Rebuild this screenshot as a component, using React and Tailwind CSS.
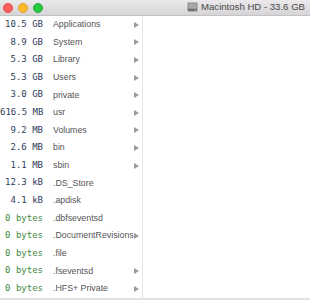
import React from 'react';

const rows = [
  { size: '10.5 GB', name: 'Applications', dir: true },
  { size: '8.9 GB', name: 'System', dir: true },
  { size: '5.3 GB', name: 'Library', dir: true },
  { size: '5.3 GB', name: 'Users', dir: true },
  { size: '3.0 GB', name: 'private', dir: true },
  { size: '616.5 MB', name: 'usr', dir: true },
  { size: '9.2 MB', name: 'Volumes', dir: true },
  { size: '2.6 MB', name: 'bin', dir: true },
  { size: '1.1 MB', name: 'sbin', dir: true },
  { size: '12.3 kB', name: '.DS_Store' },
  { size: '4.1 kB', name: '.apdisk' },
  { size: '0 bytes', name: '.dbfseventsd' },
  { size: '0 bytes', name: '.DocumentRevisions', dir: true },
  { size: '0 bytes', name: '.file' },
  { size: '0 bytes', name: '.fseventsd', dir: true },
  { size: '0 bytes', name: '.HFS+ Private', dir: true },
];

const DiskIcon = () => (
  <svg width="11" height="10" viewBox="0 0 11 10" className="mr-[3px]">
    <rect x="0.5" y="0.5" width="10" height="9" rx="1" fill="#8a8a8a" />
    <rect x="1.5" y="1.5" width="8" height="5" rx="0.5" fill="#a8a8a8" />
    <rect x="1" y="7" width="9" height="2" fill="#6e6e6e" />
    <circle cx="8.5" cy="8" r="0.6" fill="#cfcfcf" />
  </svg>
);

const App = () => {
  return (
    <div className="w-[310px] h-[300px] bg-white overflow-hidden flex flex-col" style={{ fontFamily: '"Liberation Sans", Arial, sans-serif' }}>
      <div className="h-[16px] shrink-0 flex items-center px-[2px] bg-gradient-to-b from-[#ebe9eb] to-[#d6d4d6] border-b border-[#c4c2c4]">
        <div className="flex items-center gap-[5px] pl-[1px]">
          <span className="w-[10px] h-[10px] rounded-full bg-[#fc5f57] border border-[#e2463f]" />
          <span className="w-[10px] h-[10px] rounded-full bg-[#fdbc2e] border border-[#e0a128]" />
          <span className="w-[10px] h-[10px] rounded-full bg-[#28c840] border border-[#1fab2f]" />
        </div>
        <div className="ml-auto flex items-center pr-[3px] text-[9.6px] text-[#4a4a4a]">
          <DiskIcon />
          <span>Macintosh HD - 33.6 GB</span>
        </div>
      </div>
      <div className="flex flex-1 min-h-0">
        <div className="w-[143px] border-r border-[#e6e6e6] flex flex-col">
          {rows.map((r) => {
            const zero = r.size.endsWith('bytes');
            return (
              <div key={r.name} className="h-[17.6px] shrink-0 flex items-center">
                <span
                  className={`w-[43px] shrink-0 text-right text-[9px] whitespace-nowrap ${zero ? 'text-[#3f8a3f]' : 'text-[#2e3d5c]'}`}
                  style={{ fontFamily: '"DejaVu Sans Mono", monospace' }}
                >
                  {r.size}
                </span>
                <span className="ml-[10px] text-[8.8px] text-[#555] whitespace-nowrap flex-1 overflow-hidden">{r.name}</span>
                <span className="w-[8px] shrink-0 flex items-center justify-start">
                  {r.dir && (
                    <svg width="5" height="6" viewBox="0 0 5 6">
                      <path d="M0 0 L5 3 L0 6 Z" fill="#9a9a9a" />
                    </svg>
                  )}
                </span>
              </div>
            );
          })}
        </div>
        <div className="flex-1" />
      </div>
      <div className="h-[2px] shrink-0 bg-[#e2e2e2]" />
    </div>
  );
};

export default App;
